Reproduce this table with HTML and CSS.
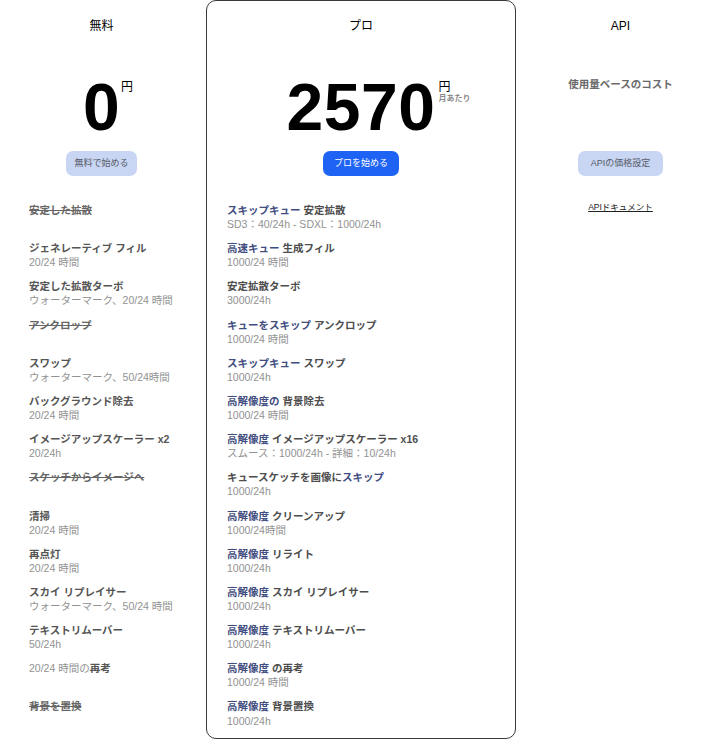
FILE: index.html
```html
<!DOCTYPE html>
<html lang="ja">
<head>
    <meta charset="UTF-8">
    <meta name="viewport" content="width=device-width, initial-scale=1.0">
    <title>料金プラン</title>
    <link rel="stylesheet" href="styles.css">
</head>
<body>
    <div class="plans">
        <!-- Free -->
        <section class="plan free">
            <h2 class="plan-name">無料</h2>
            <div class="price-box">
                <span class="price">0</span>
                <span class="unit"><span class="yen">円</span></span>
            </div>
            <a class="btn light" href="#">無料で始める</a>
            <ul class="features">
                <li class="off"><div class="f-title">安定した拡散</div></li>
                <li><div class="f-title">ジェネレーティブ フィル</div><div class="f-sub">20/24 時間</div></li>
                <li><div class="f-title">安定した拡散ターボ</div><div class="f-sub">ウォーターマーク、20/24 時間</div></li>
                <li class="off"><div class="f-title">アンクロップ</div></li>
                <li><div class="f-title">スワップ</div><div class="f-sub">ウォーターマーク、50/24時間</div></li>
                <li><div class="f-title">バックグラウンド除去</div><div class="f-sub">20/24 時間</div></li>
                <li><div class="f-title">イメージアップスケーラー x2</div><div class="f-sub">20/24h</div></li>
                <li class="off"><div class="f-title">スケッチからイメージへ</div></li>
                <li><div class="f-title">清掃</div><div class="f-sub">20/24 時間</div></li>
                <li><div class="f-title">再点灯</div><div class="f-sub">20/24 時間</div></li>
                <li><div class="f-title">スカイ リプレイサー</div><div class="f-sub">ウォーターマーク、50/24 時間</div></li>
                <li><div class="f-title">テキストリムーバー</div><div class="f-sub">50/24h</div></li>
                <li><div class="f-title"><span class="plain">20/24 時間の</span>再考</div></li>
                <li class="off"><div class="f-title">背景を置換</div></li>
            </ul>
        </section>

        <!-- Pro -->
        <section class="plan pro">
            <h2 class="plan-name">プロ</h2>
            <div class="price-box">
                <span class="price">2570</span>
                <span class="unit"><span class="yen">円</span><span class="per">月あたり</span></span>
            </div>
            <a class="btn primary" href="#">プロを始める</a>
            <ul class="features">
                <li><div class="f-title"><span class="hl">スキップキュー</span> 安定拡散</div><div class="f-sub">SD3：40/24h - SDXL：1000/24h</div></li>
                <li><div class="f-title"><span class="hl">高速キュー</span> 生成フィル</div><div class="f-sub">1000/24 時間</div></li>
                <li><div class="f-title">安定拡散ターボ</div><div class="f-sub">3000/24h</div></li>
                <li><div class="f-title"><span class="hl">キューをスキップ</span> アンクロップ</div><div class="f-sub">1000/24 時間</div></li>
                <li><div class="f-title"><span class="hl">スキップキュー</span> スワップ</div><div class="f-sub">1000/24h</div></li>
                <li><div class="f-title"><span class="hl">高解像度の</span> 背景除去</div><div class="f-sub">1000/24 時間</div></li>
                <li><div class="f-title"><span class="hl">高解像度</span> イメージアップスケーラー x16</div><div class="f-sub">スムース：1000/24h - 詳細：10/24h</div></li>
                <li><div class="f-title">キュースケッチを画像に<span class="hl">スキップ</span></div><div class="f-sub">1000/24h</div></li>
                <li><div class="f-title"><span class="hl">高解像度</span> クリーンアップ</div><div class="f-sub">1000/24時間</div></li>
                <li><div class="f-title"><span class="hl">高解像度</span> リライト</div><div class="f-sub">1000/24h</div></li>
                <li><div class="f-title"><span class="hl">高解像度</span> スカイ リプレイサー</div><div class="f-sub">1000/24h</div></li>
                <li><div class="f-title"><span class="hl">高解像度</span> テキストリムーバー</div><div class="f-sub">1000/24h</div></li>
                <li><div class="f-title"><span class="hl">高解像度</span> の再考</div><div class="f-sub">1000/24 時間</div></li>
                <li><div class="f-title"><span class="hl">高解像度</span> 背景置換</div><div class="f-sub">1000/24h</div></li>
            </ul>
        </section>

        <!-- API -->
        <section class="plan api">
            <h2 class="plan-name">API</h2>
            <div class="usage">使用量ベースのコスト</div>
            <a class="btn light wide" href="#">APIの価格設定</a>
            <a class="doc-link" href="#">APIドキュメント</a>
        </section>
    </div>
</body>
</html>
```

FILE: styles.css
```css
body {
    margin: 0;
    font-family: "Liberation Sans", "Noto Sans CJK JP", sans-serif;
    background: #fff;
    color: #000;
    overflow: hidden;
}
.plans {
    display: grid;
    grid-template-columns: 187px 310px 187px;
    column-gap: 11px;
    padding-left: 8px;
    align-items: start;
}
.plan {
    display: flex;
    flex-direction: column;
    align-items: center;
    padding: 18px 0 10px;
}
.plan.pro {
    border: 1px solid #3a3a3a;
    border-radius: 10px;
    padding-top: 17px;
}
.plan-name {
    margin: 0;
    font-size: 12px;
    line-height: 16px;
    font-weight: normal;
}

/* price */
.price-box {
    display: flex;
    margin-top: 40px;
    height: 66px;
}
.price {
    font-size: 66px;
    line-height: 66px;
    font-weight: bold;
    letter-spacing: 0.5px;
}
.unit {
    width: 0;
    display: flex;
    flex-direction: column;
    white-space: nowrap;
    padding-top: 7px;
}
.yen {
    font-size: 12px;
    line-height: 13px;
    padding-left: 3px;
}
.free .yen {
    padding-left: 1px;
}
.per {
    font-size: 8px;
    line-height: 10px;
    color: #8a8a8a;
    font-weight: bold;
    padding-left: 3px;
}
.usage {
    margin-top: 43px;
    height: 63px;
    font-size: 10.5px;
    line-height: 14px;
    font-weight: bold;
    color: #6a6a6a;
}

/* buttons */
.btn {
    display: inline-block;
    margin-top: 11px;
    height: 25px;
    line-height: 25px;
    padding: 0 8px;
    border-radius: 7px;
    font-size: 9px;
    text-decoration: none;
}
.btn.light {
    background: #c8d5f3;
    color: #575c68;
}
.btn.primary {
    background: #1f63f4;
    color: #fff;
    padding: 0 11px;
}
.btn.wide {
    padding: 0 13px;
}
.doc-link {
    margin-top: 25px;
    font-size: 8.5px;
    line-height: 12px;
    color: #222;
}

/* feature list */
.features {
    list-style: none;
    margin: 27px 0 0;
    padding: 0 20px;
    align-self: stretch;
    display: flex;
    flex-direction: column;
    gap: 10px;
}
.free .features {
    padding-left: 21px;
}
.features li {
    height: 28.2px;
}
.f-title {
    font-size: 10.5px;
    line-height: 14.1px;
    font-weight: bold;
    color: #555;
    white-space: nowrap;
}
.f-sub {
    font-size: 10.5px;
    line-height: 14.1px;
    color: #929292;
    white-space: nowrap;
}
.off .f-title {
    text-decoration: line-through;
    color: #666;
}
.plain {
    font-weight: normal;
    color: #929292;
}
.hl {
    color: #3f4d80;
}
.pro .f-title {
    color: #4d4d4d;
}
.pro .f-title .hl {
    color: #3f4d80;
}
```
